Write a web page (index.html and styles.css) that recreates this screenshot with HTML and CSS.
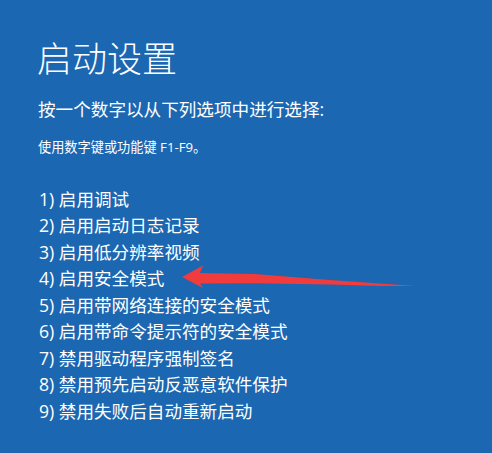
FILE: index.html
```html
<!DOCTYPE html>
<html lang="zh-CN">
<head>
<meta charset="utf-8">
<title>启动设置</title>
<link rel="stylesheet" href="styles.css">
</head>
<body>
<main class="screen">
  <h1 class="title">启动设置</h1>
  <p class="prompt">按一个数字以从下列选项中进行选择:</p>
  <p class="hint">使用数字键或功能键 F1-F9。</p>
  <ol class="options">
    <li>1) 启用调试</li>
    <li>2) 启用启动日志记录</li>
    <li>3) 启用低分辨率视频</li>
    <li>4) 启用安全模式</li>
    <li>5) 启用带网络连接的安全模式</li>
    <li>6) 启用带命令提示符的安全模式</li>
    <li>7) 禁用驱动程序强制签名</li>
    <li>8) 禁用预先启动反恶意软件保护</li>
    <li>9) 禁用失败后自动重新启动</li>
  </ol>
  <svg class="arrow" width="492" height="453" viewBox="0 0 492 453" aria-hidden="true">
    <polygon fill="#f23b3c" points="182,277 203,265.5 200,273 255,274 330,280 380,283.5 416,286 380,286 330,284.6 255,283.2 200,283.5 203,288"/>
  </svg>
</main>
</body>
</html>
```
FILE: styles.css
```css
html, body {
  margin: 0;
  padding: 0;
  background: #1c67b1;
}
.screen {
  position: relative;
  width: 492px;
  height: 453px;
  box-sizing: border-box;
  padding: 37px 0 0 37px;
  color: #ffffff;
  font-family: "Open Sans", "Noto Sans CJK SC", sans-serif;
  overflow: hidden;
}
.title {
  margin: 0;
  font-size: 35px;
  line-height: 44px;
  font-weight: 300;
}
.prompt {
  margin: 14.5px 0 0 1px;
  font-size: 17.6px;
  line-height: 26px;
  font-weight: 400;
}
.hint {
  margin: 15px 0 0 1px;
  font-size: 13.2px;
  line-height: 20px;
}
.options {
  list-style: none;
  margin: 29px 0 0 2px;
  padding: 0;
  font-size: 17.6px;
  line-height: 26.56px;
}
.arrow {
  position: absolute;
  left: 0;
  top: 0;
}
```
